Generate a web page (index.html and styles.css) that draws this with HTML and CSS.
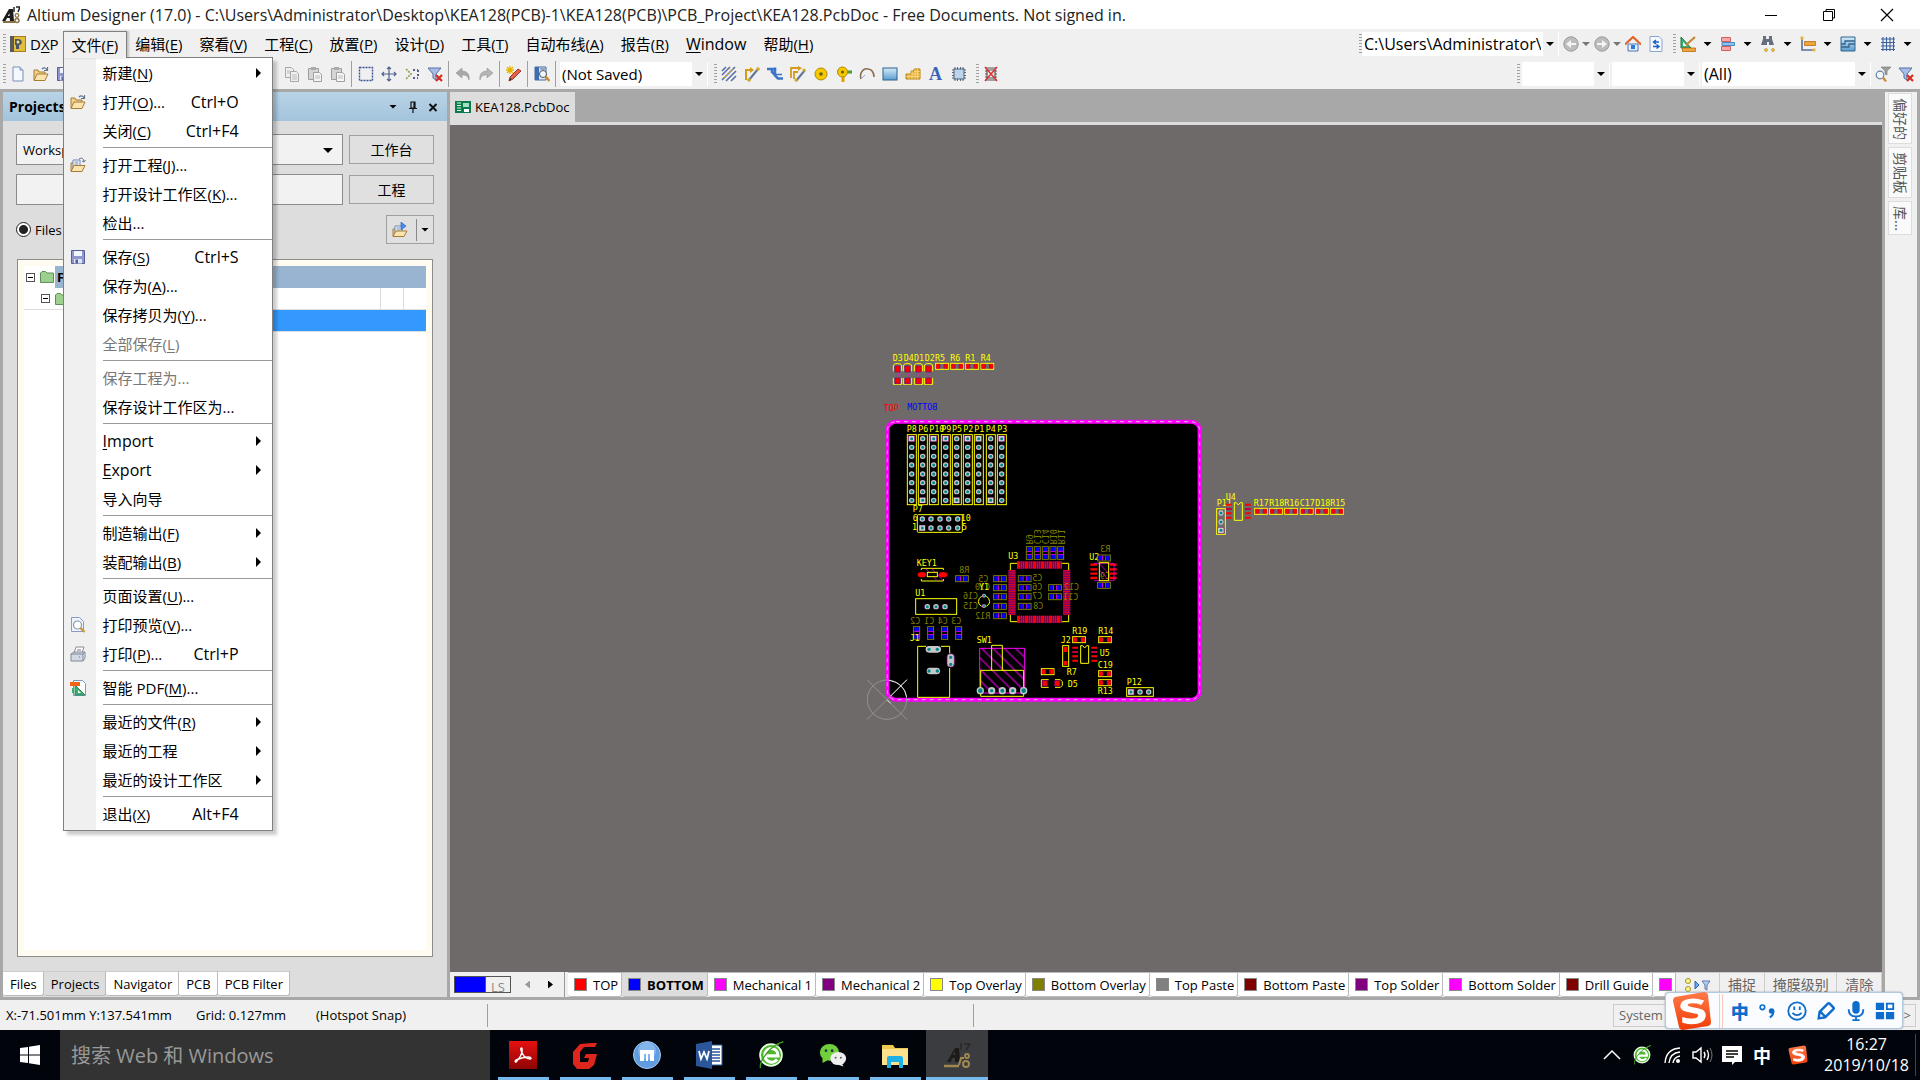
FILE: index.html
```html
<!DOCTYPE html>
<html lang="zh-CN">
<head>
<meta charset="utf-8">
<title>Altium Designer (17.0)</title>
<link rel="stylesheet" href="styles.css">
</head>
<body>
<svg class="sprite" aria-hidden="true">
  <defs>
    <linearGradient id="g-red" x1="0" y1="0" x2="0" y2="1"><stop offset="0" stop-color="#e81010"/><stop offset="1" stop-color="#8c0404"/></linearGradient>
    <linearGradient id="g-blue" x1="0" y1="0" x2="0" y2="1"><stop offset="0" stop-color="#d4ecf8"/><stop offset="1" stop-color="#5a9cd0"/></linearGradient>
    <linearGradient id="g-orange" x1="0" y1="0" x2="0" y2="1"><stop offset="0" stop-color="#ff7a48"/><stop offset="1" stop-color="#f03c08"/></linearGradient>
    <symbol id="i-app" viewBox="0 0 18 18"><path d="M0 15L7 3h4l1 12H8l-.4-3H5l-1.500 3z" fill="#1c1c1c"/><path d="M6 10h1.600L7.300 7z" fill="#fff"/><path d="M12 1v5M14 1h4l-2 5" stroke="#222" fill="none" stroke-width="1.500"/><path d="M1 16h12" stroke="#8a7346" stroke-width="2"/><circle cx="15" cy="9.500" r="1.800" fill="none" stroke="#8a7346" stroke-width="1.300"/><circle cx="15" cy="14.500" r="2" fill="none" stroke="#8a7346" stroke-width="1.500"/></symbol>
    <symbol id="i-dxp" viewBox="0 0 16 16"><rect x=".5" y=".5" width="15" height="15" fill="#e3bd3c" stroke="#a5801c"/><path d="M0 0h4v16H0z" fill="#5a5a5a"/><path d="M5 3h3c5 0 5 6 1 6v4H6V9H5z" fill="#4c5568"/><circle cx="8" cy="6" r="1.500" fill="#f5dc80"/></symbol>
    <symbol id="i-new" viewBox="0 0 16 16"><path d="M3 1h7l3 3v11H3z" fill="#f4f8ff" stroke="#7b8fb8"/><path d="M10 1v3h3" fill="#cfdcf2" stroke="#7b8fb8"/></symbol>
    <symbol id="i-open" viewBox="0 0 16 16"><path d="M1 14V4h4l1 2h6v3" fill="#f3d08a" stroke="#a87c35"/><path d="M1 14.500L4 8h11l-3 6.500z" fill="#fbe3b0" stroke="#a87c35"/><path d="M9 3c2-2 4-1 5 1m.5-3v3.500H11" fill="none" stroke="#60758e" stroke-width="1.200"/></symbol>
    <symbol id="i-openprj" viewBox="0 0 16 16"><path d="M1 14V6h3" fill="#f3d08a" stroke="#a87c35"/><path d="M3 3h7v8H3z" fill="#fff" stroke="#6b86b5"/><path d="M4.500 5h4M4.500 7h4" stroke="#6b86b5"/><path d="M1 14.500L4 8.500h11l-3 6z" fill="#fbe3b0" stroke="#a87c35"/><path d="M9 2c3-2 5 0 5 3m1.500-2L14 5l-2-1" fill="none" stroke="#60758e"/></symbol>
    <symbol id="i-save" viewBox="0 0 16 16"><path d="M1.500 1.500h13v13h-13z" fill="#8f98cc" stroke="#565f96"/><path d="M4 2h8v5H4z" fill="#f2f4ff"/><path d="M4 10h8v4.500H4z" fill="#dfe3f5"/><path d="M5.500 10.500h2.500v4H5.500z" fill="#565f96"/></symbol>
    <symbol id="i-copy" viewBox="0 0 16 16"><path d="M1.500 1.500h6l2 2v8h-8z" fill="#efefef" stroke="#a8a8a8"/><path d="M6.500 5.500h6l2 2v8h-8z" fill="#efefef" stroke="#a8a8a8"/><path d="M8 9h5M8 11h5M8 13h5M3 5h3M3 7h3" stroke="#bbb"/></symbol>
    <symbol id="i-paste" viewBox="0 0 16 16"><path d="M1.500 2.500h10v11h-10z" fill="#d5d5d5" stroke="#9c9c9c"/><path d="M4 1h5v3H4z" fill="#aaa"/><path d="M6.500 6.500h6l2 2v7h-8z" fill="#f5f5f5" stroke="#a0a0a0"/><path d="M8 10h5M8 12h5" stroke="#bbb"/></symbol>
    <symbol id="i-select" viewBox="0 0 16 16"><rect x="1.500" y="1.500" width="13" height="13" fill="none" stroke="#3c5294" stroke-width="1.400" stroke-dasharray="2 1"/></symbol>
    <symbol id="i-move" viewBox="0 0 16 16"><path d="M8 1v14M1 8h14M6 3l2-2 2 2M6 13l2 2 2-2M3 6L1 8l2 2M13 6l2 2-2 2" fill="none" stroke="#50628e" stroke-width="1.200"/></symbol>
    <symbol id="i-desel" viewBox="0 0 16 16"><path d="M2 3l5 5-5 5" fill="none" stroke="#929a50" stroke-width="1.600" stroke-dasharray="2 1"/><path d="M9 4h5M9 12h5M14 4v8" stroke="#555f88" stroke-width="2" stroke-dasharray="2 2"/></symbol>
    <symbol id="i-filterx" viewBox="0 0 16 16"><path d="M1 2h13L9 8v6l-3-2V8z" fill="#a5bde8" stroke="#56709f"/><path d="M9 9l6 6m0-6l-6 6" stroke="#d42c20" stroke-width="2.200"/></symbol>
    <symbol id="i-undo" viewBox="0 0 16 16"><path d="M1 7l6-5v3c5 0 8 3 7 9-1-4-3-5-7-5v3z" fill="#a8a8a8" stroke="#8d8d8d" stroke-width=".5"/></symbol>
    <symbol id="i-redo" viewBox="0 0 16 16"><path d="M15 7L9 2v3c-5 0-8 3-7 9 1-4 3-5 7-5v3z" fill="#b4b4b4" stroke="#8d8d8d" stroke-width=".5"/></symbol>
    <symbol id="i-pencil" viewBox="0 0 16 16"><path d="M3 15l1-4 8-8 3 2-8 8z" fill="#e2604c" stroke="#a03828"/><path d="M3 15l1-3 2 1z" fill="#333"/><path d="M4 0v8M0 4h8M1 1l6 6M7 1L1 7" stroke="#e6b400" stroke-width="1.300"/></symbol>
    <symbol id="i-browse" viewBox="0 0 16 16"><path d="M1 1h11v13H1z" fill="#dce8f8" stroke="#46689c"/><path d="M1 1h4v13H1z" fill="#3f6cae"/><path d="M6 3h5" stroke="#46689c"/><circle cx="9" cy="8" r="3.500" fill="#eef6ff" stroke="#555"/><path d="M11.500 10.500l4 4.500" stroke="#c9882c" stroke-width="2.400"/></symbol>
    <symbol id="i-hatch" viewBox="0 0 16 16"><path d="M1 5l4-4M1 9l8-8M1 14L14 1M5 15L15 5M10 15l5-5" stroke="#5b6fa8" stroke-width="1.600"/><path d="M3 12L12 3" stroke="#d3a030"/></symbol>
    <symbol id="i-route" viewBox="0 0 16 16"><path d="M2 14V4h4" fill="none" stroke="#d39b1c" stroke-width="2"/><path d="M6 1l4 3-4 3z" fill="#d39b1c"/><path d="M5 14l9-11" stroke="#60759c" stroke-width="2"/><circle cx="5" cy="14" r="1.800" fill="#d3a81c"/><circle cx="14" cy="3" r="1.800" fill="#d3a81c"/></symbol>
    <symbol id="i-route2" viewBox="0 0 16 16"><path d="M1 12V2h8M4 13V6h4" fill="none" stroke="#d39b1c" stroke-width="1.800"/><path d="M8 0l4 2-4 3z" fill="#d39b1c"/><path d="M6 15l9-11" stroke="#60759c" stroke-width="2"/><circle cx="6" cy="14" r="1.600" fill="#d3a81c"/><circle cx="14" cy="4" r="1.600" fill="#d3a81c"/></symbol>
    <symbol id="i-multi" viewBox="0 0 16 16"><path d="M0 3h8M8 1.500v8l3 3h5M5 3v3l3 3" fill="none" stroke="#3c74c8" stroke-width="2.600"/><path d="M9 8.500h6" stroke="#3c74c8" stroke-width="1.500"/></symbol>
    <symbol id="i-via" viewBox="0 0 16 16"><circle cx="8" cy="8" r="6" fill="#f5c800" stroke="#b38900"/><circle cx="8" cy="8" r="1.800" fill="#6b5a18"/></symbol>
    <symbol id="i-pad" viewBox="0 0 16 16"><path d="M7 6h9" stroke="#4f9c2c" stroke-width="3"/><path d="M7 8v8" stroke="#e0a000" stroke-width="3"/><circle cx="6.500" cy="6" r="5" fill="#f5c800" stroke="#b38900"/><circle cx="6.500" cy="6" r="1.600" fill="#6b5a18"/></symbol>
    <symbol id="i-arc" viewBox="0 0 16 16"><path d="M2 13C0 6 5 2 9 3c4 0 6 4 6 8" fill="none" stroke="#8a6d50" stroke-width="1.600"/><path d="M2 13l4-4" stroke="#9aa3cc"/></symbol>
    <symbol id="i-fill" viewBox="0 0 16 16"><rect x="1" y="2" width="14" height="12" fill="url(#g-blue)" stroke="#2d618e"/></symbol>
    <symbol id="i-poly" viewBox="0 0 16 16"><path d="M1 13V8h5V5h3V3h6v10z" fill="#e8b33c" stroke="#b98416"/><path d="M1 10.500h14M6 8h9M9 5.500h6M4 8v5M7 5v8M10 3v10M12.500 3v10" stroke="#fbe3a0" stroke-width=".6"/></symbol>
    <symbol id="i-chip" viewBox="0 0 16 16"><path d="M4 1v14M6.500 1v14M9.500 1v14M12 1v14M1 4h14M1 6.500h14M1 9.500h14M1 12h14" stroke="#667" stroke-width="1"/><rect x="3" y="3" width="10" height="10" fill="#bcd4ec" stroke="#4c6078"/></symbol>
    <symbol id="i-nochip" viewBox="0 0 16 16"><path d="M2 2h12M2 14h12M4 4h8v8H4zM2 5h2M2 8h2M2 11h2M12 5h2M12 8h2M12 11h2" fill="none" stroke="#555" stroke-width="1.200"/><path d="M2 1l12 14M14 1L2 15" stroke="#e03030" stroke-width="1.500"/></symbol>
    <symbol id="i-back" viewBox="0 0 16 16"><circle cx="8" cy="8" r="7.200" fill="#bdbdbd" stroke="#999"/><path d="M13 7H8V4L3 8l5 4V9h5z" fill="#f4f4f4"/></symbol>
    <symbol id="i-fwd" viewBox="0 0 16 16"><circle cx="8" cy="8" r="7.200" fill="#bdbdbd" stroke="#999"/><path d="M3 7h5V4l5 4-5 4V9H3z" fill="#f4f4f4"/></symbol>
    <symbol id="i-home" viewBox="0 0 16 16"><path d="M3 8h10v7H3z" fill="#e8eefc" stroke="#4a76b8"/><path d="M0 8.500L8 1l8 7.500" fill="none" stroke="#e06428" stroke-width="2.200"/><path d="M6 9h4v4H6z" fill="#2c7ce0"/></symbol>
    <symbol id="i-refresh" viewBox="0 0 16 16"><path d="M2 .5h9l3 3v12H2z" fill="#f4f8ff" stroke="#8da4cc"/><path d="M11 6H6M8 4L5.500 6 8 8M5 10.500h5M8.500 8.500L11 10.500l-2.500 2" fill="none" stroke="#1d62c8" stroke-width="1.500"/></symbol>
    <symbol id="i-draft" viewBox="0 0 16 16"><path d="M1 1v11h10z" fill="#3fae74" stroke="#1f7848"/><path d="M3 6v4h4z" fill="#fff"/><path d="M6 9l9-8" stroke="#c6862c" stroke-width="2.200"/><path d="M2.500 12h13v3.500h-13z" fill="#f0a53c" stroke="#b46c10" stroke-width=".8"/></symbol>
    <symbol id="i-align" viewBox="0 0 16 16"><path d="M1.500 1.500h9v4h-9zM1.500 10.500h9v4h-9z" fill="#f8a8a8" stroke="#cc6060"/><path d="M2 6.500h12.500v3H2z" fill="#8fc3ee" stroke="#4a88c0"/></symbol>
    <symbol id="i-find" viewBox="0 0 16 16"><path d="M3 0h3v3h3V0h3v3l2 6H9V6H7v3H1l2-6z" fill="#667080"/><circle cx="6" cy="14" r="1.500" fill="#f0c84c" stroke="#a88820" stroke-width=".6"/><circle cx="13" cy="14" r="1.500" fill="#f0c84c" stroke="#a88820" stroke-width=".6"/></symbol>
    <symbol id="i-dim" viewBox="0 0 16 16"><path d="M2 2v12h12" fill="none" stroke="#56709f" stroke-width="1.600"/><path d="M4.500 5.500h11v4h-11z" fill="#f0a53c" stroke="#b46c10" stroke-width=".8"/><circle cx="2" cy="2" r="1.700" fill="#e4b840"/><circle cx="14" cy="14" r="1.700" fill="#e4b840"/></symbol>
    <symbol id="i-room" viewBox="0 0 16 16"><path d="M1 1h14v14H1z" fill="url(#g-blue)" stroke="#33648c"/><path d="M1 8h4V5h10M1 11h8V8h6" fill="none" stroke="#33648c" stroke-width="1.300"/></symbol>
    <symbol id="i-grid" viewBox="0 0 16 16"><path d="M3 1v14M6.500 1v14M10 1v14M13.500 1v14M1 3h14M1 6.500h14M1 10h14M1 13.500h14" stroke="#3c5fa0" stroke-width="1.100"/></symbol>
    <symbol id="i-zoomf" viewBox="0 0 16 16"><path d="M6 1h10l-4 4v4l-2-1V5z" fill="#9c9c9c" stroke="#777" stroke-width=".6"/><circle cx="5" cy="9" r="3.800" fill="#eef6ff" stroke="#6a7f98" stroke-width="1.200"/><path d="M8 11.500l3 4" stroke="#cf8a2c" stroke-width="2.200"/></symbol>
    <symbol id="i-pcb" viewBox="0 0 16 16"><path d="M0 2h16v12H0z" fill="#0b7a4c"/><path d="M2 4h4M2 6.500h4M2 9h4M2 11.500h4" stroke="#d8f4e4" stroke-width="1.200"/><path d="M8 4h6v4H8z" fill="#9fe0c0"/><path d="M9 10h5v3H9z" fill="#fff"/></symbol>
    <symbol id="i-explore" viewBox="0 0 16 16"><path d="M1 14V7h3" fill="#f3d08a" stroke="#a87c35"/><path d="M3 4h7v8H3z" fill="#fff" stroke="#6b86b5"/><path d="M4.500 6h4M4.500 8h4" stroke="#6b86b5"/><path d="M1 14.500L4 9h11l-3 5.500z" fill="#fbe3b0" stroke="#a87c35"/><path d="M9 0l5 4-5 4z" fill="#4a8cf0" stroke="#1f58b8" stroke-width=".6"/></symbol>
    <symbol id="i-folder" viewBox="0 0 14 12"><path d="M.5 11.500V2l1.500-1.500h3.500L7 2h6.500v9.500z" fill="#9bd08e" stroke="#5f8f58"/></symbol>
    <symbol id="i-preview" viewBox="0 0 16 16"><path d="M1.500.5h8l4 4v10h-12z" fill="#eef4ff" stroke="#8a9cc0"/><circle cx="7.500" cy="8" r="4" fill="#fff" stroke="#8d98a8" stroke-width="1.200"/><path d="M10.500 11l4 4" stroke="#c9963c" stroke-width="2.400"/></symbol>
    <symbol id="i-print" viewBox="0 0 16 16"><path d="M4 7l2-6h8l-2 6" fill="#fff" stroke="#8c8c9a"/><path d="M1 8l3-2h11l-2 2v7H1z" fill="#d4dae4" stroke="#7f8898"/><path d="M1 8h12l2-2v6l-2 3" fill="none" stroke="#7f8898"/><path d="M7 4h4M9 11h1" stroke="#777"/></symbol>
    <symbol id="i-pdf" viewBox="0 0 16 16"><path d="M3.500.5h9l3 3v12h-12z" fill="#fff" stroke="#7a98c0"/><path d="M5 5v10h10z" fill="#3fae74" stroke="#2a8a56"/><path d="M8 10v3h3z" fill="#fff"/><path d="M0 2h10v4H0z" fill="#f06414"/><path d="M2 8v5h2V8z" fill="#3fae74"/></symbol>
    <symbol id="i-mask" viewBox="0 0 28 16"><circle cx="4" cy="4" r="2.500" fill="#fff890" stroke="#a09420"/><circle cx="4" cy="12" r="2.500" fill="#fff890" stroke="#a09420"/><path d="M11 4l4 4-4 4z" fill="#6aa8f0" stroke="#2c62b0"/><path d="M18 4h8l-3 4v5l-2-1V8z" fill="#b8d0f4" stroke="#6079ab"/></symbol>
    <symbol id="i-sogou" viewBox="0 0 40 40"><path d="M3 6L32 1q3 0 4 3l3 27q0 3-3 4L11 39q-3 0-4-3L1 10q0-3 2-4z" fill="url(#g-orange)"/><path d="M31 10C22 7 9 8 9 15c0 8 19 4 18 10-1 4-10 4-16 2v4c9 3 21 2 22-6 1-10-18-6-18-11 0-3 9-3 14-1z" fill="#fff" stroke="#fff" stroke-width="1.500"/></symbol>
    <symbol id="i-ebrowser" viewBox="0 0 32 32"><circle cx="16" cy="16" r="12.500" fill="#4cb82c" stroke="#e8ffe0" stroke-width="2"/><path d="M23 21c-5 6-14 3-14-5 0-10 15-10 15 1H11" fill="none" stroke="#fff" stroke-width="3.500"/><path d="M4 31c-2-8 12-27 26-30-3 0-6 3-7 5" fill="none" stroke="#3f9c22" stroke-width="1.500"/></symbol>
    <symbol id="t-pdf" viewBox="0 0 28 28"><path d="M0 0h28v28H0z" fill="url(#g-red)"/><path d="M6 21c4-2 8-9 7-13 0-2-2-1-1 1 1 5 5 9 9 9 2 0 1-2-2-2-5 0-9 2-12 3-2 2 0 3 1 1z" fill="none" stroke="#fff" stroke-width="1.400"/></symbol>
    <symbol id="t-g" viewBox="0 0 28 28"><path d="M26 2l-2 4H13L9 11v10h8l1-4h-5l2-4h11l-3 11-5 4H6l-4-5V11l7-8 12-1z" fill="#e0261c"/></symbol>
    <symbol id="t-m" viewBox="0 0 28 28"><circle cx="14" cy="14" r="13.500" fill="#5f9ce0" stroke="#a8ccf4"/><circle cx="14" cy="10" r="9" fill="#9cc8f4" opacity=".6"/><path d="M7 9h14v11h-4v-7h-2v7h-2v-7h-2v7H7z" fill="#fff"/></symbol>
    <symbol id="t-w" viewBox="0 0 28 28"><path d="M15 4h12v20H15z" fill="#fff" stroke="#2b579a"/><path d="M17 8h8M17 11h8M17 14h8M17 17h8M17 20h8" stroke="#2b579a" stroke-width="1.500"/><path d="M1 3l16-3v28L1 25z" fill="#2b579a"/><path d="M4 10l2 8 3-7 3 7 2-8" fill="none" stroke="#fff" stroke-width="1.800"/></symbol>
    <symbol id="t-wechat" viewBox="0 0 32 28"><ellipse cx="12" cy="11" rx="11" ry="9.500" fill="#6fd03c"/><path d="M4 17l0 6 6-3z" fill="#6fd03c"/><circle cx="8" cy="9" r="1.500" fill="#234"/><circle cx="15" cy="9" r="1.500" fill="#234"/><ellipse cx="22" cy="18" rx="9" ry="7.500" fill="#eee"/><path d="M26 23l2 4-6-2z" fill="#eee"/><circle cx="19" cy="17" r="1.100" fill="#555"/><circle cx="25" cy="17" r="1.100" fill="#555"/></symbol>
    <symbol id="t-folder" viewBox="0 0 28 28"><path d="M1 4h11l2 3h13v17H1z" fill="#f0c850"/><path d="M1 8h26v16H1z" fill="#fde08c"/><path d="M6 27V17q0-2 2-2h12q2 0 2 2v10h-4v-6h-8v6z" fill="#20b0e8"/></symbol>
    <symbol id="t-ad" viewBox="0 0 28 28"><path d="M4 21L12 7h4l1 14h-5v-4H9l-1 4zM10 14h2v-4z" fill="#1e1b18" fill-rule="evenodd"/><path d="M18 2v7M21 3h6l-4 6" fill="none" stroke="#2c2824" stroke-width="1.500"/><path d="M1 25h15" stroke="#a08850" stroke-width="2.500"/><path d="M16 24l2-7h3" fill="none" stroke="#a08850" stroke-width="2"/><circle cx="24" cy="15" r="2" fill="none" stroke="#a08850" stroke-width="1.800"/><circle cx="23" cy="23" r="3" fill="none" stroke="#a08850" stroke-width="2"/></symbol>
  </defs>
</svg>

<header class="titlebar">
  <svg class="ic app"><use href="#i-app"/></svg>
  <h1>Altium Designer (17.0) - C:\Users\Administrator\Desktop\KEA128(PCB)-1\KEA128(PCB)\PCB_Project\KEA128.PcbDoc - Free Documents. Not signed in.</h1>
  <div class="winbtns">
    <button aria-label="Minimize"><svg viewBox="0 0 14 14"><path d="M1 7.500h12" stroke="#000"/></svg></button>
    <button aria-label="Restore"><svg viewBox="0 0 14 14"><path d="M1.500 3.500h9v9h-9zM4 3.500v-2h8.500V10h-2" fill="none" stroke="#000"/></svg></button>
    <button aria-label="Close"><svg viewBox="0 0 14 14"><path d="M1 1l12 12M13 1L1 13" stroke="#000" stroke-width="1.200"/></svg></button>
  </div>
</header>

<div class="bar">
  <nav class="menubar">
    <i class="grip"></i>
    <button class="dxp"><svg class="ic"><use href="#i-dxp"/></svg><span>D<u>X</u>P</span></button>
    <div class="menu-root">
      <button class="open">文件(<u>F</u>)</button>
      <ul class="popup">
        <li><button>新建(<u>N</u>)<i class="sub"></i></button></li>
        <li><button><svg class="ic"><use href="#i-open"/></svg>打开(<u>O</u>)...<kbd>Ctrl+O</kbd></button></li>
        <li><button>关闭(<u>C</u>)<kbd>Ctrl+F4</kbd></button></li>
        <li class="line"></li>
        <li><button><svg class="ic"><use href="#i-openprj"/></svg>打开工程(<u>J</u>)...</button></li>
        <li><button>打开设计工作区(<u>K</u>)...</button></li>
        <li><button>检出...</button></li>
        <li class="line"></li>
        <li><button><svg class="ic"><use href="#i-save"/></svg>保存(<u>S</u>)<kbd>Ctrl+S</kbd></button></li>
        <li><button>保存为(<u>A</u>)...</button></li>
        <li><button>保存拷贝为(<u>Y</u>)...</button></li>
        <li><button disabled>全部保存(<u>L</u>)</button></li>
        <li class="line"></li>
        <li><button disabled>保存工程为...</button></li>
        <li><button>保存设计工作区为...</button></li>
        <li class="line"></li>
        <li><button class="latin"><span><u>I</u>mport</span><i class="sub"></i></button></li>
        <li><button class="latin"><span><u>E</u>xport</span><i class="sub"></i></button></li>
        <li><button>导入向导</button></li>
        <li class="line"></li>
        <li><button>制造输出(<u>F</u>)<i class="sub"></i></button></li>
        <li><button>装配输出(<u>B</u>)<i class="sub"></i></button></li>
        <li class="line"></li>
        <li><button>页面设置(<u>U</u>)...</button></li>
        <li><button><svg class="ic"><use href="#i-preview"/></svg>打印预览(<u>V</u>)...</button></li>
        <li><button><svg class="ic"><use href="#i-print"/></svg>打印(<u>P</u>)...<kbd>Ctrl+P</kbd></button></li>
        <li class="line"></li>
        <li><button><svg class="ic"><use href="#i-pdf"/></svg><span>智能 PDF(<u>M</u>)...</span></button></li>
        <li class="line"></li>
        <li><button>最近的文件(<u>R</u>)<i class="sub"></i></button></li>
        <li><button>最近的工程<i class="sub"></i></button></li>
        <li><button>最近的设计工作区<i class="sub"></i></button></li>
        <li class="line"></li>
        <li><button>退出(<u>X</u>)<kbd>Alt+F4</kbd></button></li>
      </ul>
    </div>
    <button>编辑(<u>E</u>)</button>
    <button>察看(<u>V</u>)</button>
    <button>工程(<u>C</u>)</button>
    <button>放置(<u>P</u>)</button>
    <button>设计(<u>D</u>)</button>
    <button>工具(<u>T</u>)</button>
    <button>自动布线(<u>A</u>)</button>
    <button>报告(<u>R</u>)</button>
    <button class="latin"><span><u>W</u>indow</span></button>
    <button>帮助(<u>H</u>)</button>
  </nav>
  <div class="tools right">
    <i class="grip"></i>
    <label class="combo c-path"><select aria-label="Path"><option>C:\Users\Administrator\Desktop</option></select></label>
    <button class="tb"><svg class="ic"><use href="#i-back"/></svg></button><i class="caret dim"></i>
    <button class="tb"><svg class="ic"><use href="#i-fwd"/></svg></button><i class="caret dim"></i>
    <button class="tb"><svg class="ic"><use href="#i-home"/></svg></button>
    <button class="tb"><svg class="ic"><use href="#i-refresh"/></svg></button>
    <i class="grip gap"></i>
    <button class="tb split"><svg class="ic"><use href="#i-draft"/></svg><i class="caret"></i></button>
    <button class="tb split"><svg class="ic"><use href="#i-align"/></svg><i class="caret"></i></button>
    <button class="tb split"><svg class="ic"><use href="#i-find"/></svg><i class="caret"></i></button>
    <button class="tb split"><svg class="ic"><use href="#i-dim"/></svg><i class="caret"></i></button>
    <button class="tb split"><svg class="ic"><use href="#i-room"/></svg><i class="caret"></i></button>
    <button class="tb split"><svg class="ic"><use href="#i-grid"/></svg><i class="caret"></i></button>
  </div>
</div>

<div class="bar">
  <div class="tools">
    <i class="grip"></i>
    <button class="tb"><svg class="ic"><use href="#i-new"/></svg></button>
    <button class="tb"><svg class="ic"><use href="#i-open"/></svg></button>
    <button class="tb"><svg class="ic"><use href="#i-save"/></svg></button>
    <span class="covered"></span>
    <button class="tb"><svg class="ic"><use href="#i-copy"/></svg></button>
    <button class="tb"><svg class="ic"><use href="#i-paste"/></svg></button>
    <button class="tb"><svg class="ic"><use href="#i-paste"/></svg></button>
    <i class="sep"></i>
    <button class="tb"><svg class="ic"><use href="#i-select"/></svg></button>
    <button class="tb"><svg class="ic"><use href="#i-move"/></svg></button>
    <button class="tb"><svg class="ic"><use href="#i-desel"/></svg></button>
    <button class="tb"><svg class="ic"><use href="#i-filterx"/></svg></button>
    <i class="sep"></i>
    <button class="tb"><svg class="ic"><use href="#i-undo"/></svg></button>
    <button class="tb"><svg class="ic"><use href="#i-redo"/></svg></button>
    <i class="sep"></i>
    <button class="tb"><svg class="ic"><use href="#i-pencil"/></svg></button>
    <i class="sep"></i>
    <button class="tb"><svg class="ic"><use href="#i-browse"/></svg></button>
    <i class="sep"></i>
    <label class="combo c-view"><select aria-label="View"><option>(Not Saved)</option></select></label>
    <i class="grip gap"></i>
    <button class="tb"><svg class="ic"><use href="#i-hatch"/></svg></button>
    <button class="tb"><svg class="ic"><use href="#i-route"/></svg></button>
    <button class="tb"><svg class="ic"><use href="#i-multi"/></svg></button>
    <button class="tb"><svg class="ic"><use href="#i-route2"/></svg></button>
    <button class="tb"><svg class="ic"><use href="#i-via"/></svg></button>
    <button class="tb"><svg class="ic"><use href="#i-pad"/></svg></button>
    <button class="tb"><svg class="ic"><use href="#i-arc"/></svg></button>
    <button class="tb"><svg class="ic"><use href="#i-fill"/></svg></button>
    <button class="tb"><svg class="ic"><use href="#i-poly"/></svg></button>
    <button class="tb letter">A</button>
    <button class="tb"><svg class="ic"><use href="#i-chip"/></svg></button>
    <i class="grip gap"></i>
    <button class="tb"><svg class="ic"><use href="#i-nochip"/></svg></button>
  </div>
  <div class="tools right filters">
    <i class="grip"></i>
    <label class="combo c-small"><select aria-label="Net"><option></option></select></label>
    <label class="combo c-small"><select aria-label="Component"><option></option></select></label>
    <label class="combo c-all"><select aria-label="Filter"><option>(All)</option></select></label>
    <div class="pair">
      <button class="tb"><svg class="ic"><use href="#i-zoomf"/></svg></button>
      <button class="tb"><svg class="ic"><use href="#i-filterx"/></svg></button>
    </div>
  </div>
</div>

<main class="work">
  <aside class="panel">
    <div class="panel-head">
      <h2>Projects</h2>
      <button aria-label="Menu"><i class="caret"></i></button>
      <button aria-label="Pin"><svg viewBox="0 0 12 12"><path d="M4 1h4v6H4zM2 7.500h8M6 8v4M7 1v6" fill="none" stroke="#111" stroke-width="1.200"/></svg></button>
      <button aria-label="Close"><svg viewBox="0 0 12 12"><path d="M2.500 3l7 7M9.500 3l-7 7" stroke="#111" stroke-width="2"/></svg></button>
    </div>
    <div class="form">
      <label class="combo boxed"><select aria-label="Workspace"><option>Workspace1.DsnWrk</option></select></label>
      <button class="btn">工作台</button>
      <input type="text" class="boxed" aria-label="Project">
      <button class="btn">工程</button>
    </div>
    <div class="mode">
      <label><input type="radio" name="mode" checked>Files</label>
      <button class="btn small" aria-label="Explore"><svg class="ic"><use href="#i-explore"/></svg><i class="vline"></i><i class="caret"></i></button>
    </div>
    <div class="tree">
      <ul>
        <li class="r1"><i class="tog"></i><svg class="fold"><use href="#i-folder"/></svg><span>F</span></li>
        <li class="r2"><i class="tog"></i><svg class="fold"><use href="#i-folder"/></svg><span></span><b></b><b></b></li>
        <li class="r3"></li>
      </ul>
    </div>
    <div class="ptabs">
      <button>Files</button><button class="on">Projects</button><button>Navigator</button><button>PCB</button><button>PCB Filter</button>
    </div>
  </aside>

  <section class="doc">
    <div class="doctabs"><button><svg class="ic"><use href="#i-pcb"/></svg>KEA128.PcbDoc</button></div>
    <div class="canvas">
      <svg class="pcb" viewBox="0 0 1500 1170">
        <defs>
          <pattern id="hatch" width="24" height="24" patternUnits="userSpaceOnUse" patternTransform="rotate(-45)"><path d="M12 0v24" stroke="#f0f" stroke-width="3"/></pattern>
          <g id="pin"><rect x="-8" y="-6" width="16" height="12" fill="#800080"/><circle r="8" fill="#c8c8c8"/><circle r="4.500" fill="#008888"/></g>
          <g id="pin1"><rect x="-10" y="-9" width="20" height="18" fill="#800080"/><rect x="-9" y="-8" width="17" height="16" fill="#d0d0d0"/><circle r="4.500" fill="#008888"/></g>
          <g id="col"><rect x="0" y="0" width="27" height="210" fill="none" stroke="#ff0" stroke-width="3"/><use href="#pin" x="13" y="12"/><use href="#pin" x="13" y="38"/><use href="#pin" x="13" y="65"/><use href="#pin" x="13" y="91"/><use href="#pin" x="13" y="118"/><use href="#pin" x="13" y="144"/><use href="#pin" x="13" y="171"/><use href="#pin" x="13" y="197"/></g>
          <g id="res"><rect x="1" y="1" width="38" height="18" fill="none" stroke="#ff0" stroke-width="3"/><path d="M13 4v12M27 4v12" stroke="#800080" stroke-width="4"/><path d="M3 4h9v12H3zM28 4h9v12h-9z" fill="#f00" stroke="#f00" stroke-width="2"/></g>
          <g id="bres"><rect x="1" y="1" width="38" height="18" fill="none" stroke="#808000" stroke-width="3"/><path d="M15 3v14M25 3v14" stroke="#f0f" stroke-width="3"/><path d="M4 4h9v12H4zM27 4h9v12h-9z" fill="#00f" stroke="#00f" stroke-width="2"/></g>
          <g id="vres"><rect x="1" y="1" width="18" height="38" fill="none" stroke="#808000" stroke-width="3"/><path d="M3 15h14M3 25h14" stroke="#f0f" stroke-width="3"/><path d="M4 4h12v9H4zM4 27h12v9H4z" fill="#00f" stroke="#00f" stroke-width="2"/></g>
          <g id="diode"><path d="M1 24V8q2-7 7-7h10q7 0 8 7v16M1 44v19h25V44" fill="none" stroke="#ff0" stroke-width="3"/><path d="M6 8h15v18H6zM6 44h15v17H6z" fill="#f00" stroke="#800080" stroke-width="2"/><path d="M11 34l6-3v6z" fill="#f0f"/></g>
          <g id="soic"><path d="M0 7h17M0 20h17M0 33h17M0 46h17M57 7h17M57 20h17M57 33h17M57 46h17" stroke="#f00" stroke-width="6"/><path d="M0 20h17M57 20h17" stroke="#800080" stroke-width="3"/><path d="M25 1h6l6 7 6-7h6v53H25z" fill="none" stroke="#ff0" stroke-width="3"/></g>
        </defs>
        <g class="silk">
          <text x="98" y="63">D3</text><text x="131" y="63">D4</text><text x="162" y="63">D1</text><text x="194" y="63">D2</text><text x="225" y="63">R5</text><text x="271" y="63">R6</text><text x="316" y="63">R1</text><text x="362" y="63">R4</text>
        </g>
        <use href="#diode" x="99" y="70"/><use href="#diode" x="129" y="70"/><use href="#diode" x="162" y="70"/><use href="#diode" x="192" y="70"/>
        <use href="#res" x="226" y="69"/><use href="#res" x="271" y="69"/><use href="#res" x="316" y="69"/><use href="#res" x="362" y="69"/>
        <text class="top" x="71" y="213">TOP</text>
        <text class="bot" transform="translate(232 211) scale(-1 1)">BOTTOM</text>

        <rect x="82" y="245" width="937" height="834" rx="26" fill="#000" stroke="#f0f" stroke-width="12"/>
        <rect x="82" y="245" width="937" height="834" rx="26" fill="none" stroke="#d8b8d8" stroke-width="3" stroke-dasharray="12 12"/>

        <g class="silk">
          <text x="140" y="275">P8</text><text x="175" y="275">P6</text><text x="208" y="275">P10</text><text x="244" y="275">P9</text><text x="276" y="275">P5</text><text x="310" y="275">P2</text><text x="343" y="275">P1</text><text x="377" y="275">P4</text><text x="412" y="275">P3</text>
          <text x="158" y="516">P7</text><text x="158" y="543">6</text><text x="302" y="543">10</text><text x="156" y="570">1</text><text x="306" y="570">5</text>
          <text x="445" y="656">U3</text><text x="688" y="660">U2</text><text x="170" y="678">KEY1</text><text x="166" y="768">U1</text>
          <text x="350" y="909">SW1</text><text x="602" y="909">J2</text><text x="637" y="882">R19</text><text x="715" y="882">R14</text>
          <text x="719" y="948">U5</text><text x="713" y="984">C19</text><text x="620" y="1006">R7</text><text x="623" y="1041">D5</text><text x="713" y="1061">R13</text><text x="800" y="1035">P12</text>
          <text x="1070" y="497">P11</text><text x="1097" y="480">U4</text>
          <text x="1181" y="498">R17</text><text x="1228" y="498">R18</text><text x="1273" y="498">R16</text><text x="1319" y="498">C17</text><text x="1366" y="498">D18</text><text x="1411" y="498">R15</text>
        </g>
        <use href="#col" x="142" y="284"/><use href="#col" x="175" y="284"/><use href="#col" x="208" y="284"/><use href="#col" x="244" y="284"/><use href="#col" x="277" y="284"/><use href="#col" x="310" y="284"/><use href="#col" x="343" y="284"/><use href="#col" x="379" y="284"/><use href="#col" x="412" y="284"/>
        <use href="#pin1" x="155" y="296"/><use href="#pin1" x="221" y="296"/><use href="#pin1" x="257" y="296"/><use href="#pin1" x="323" y="296"/><use href="#pin1" x="356" y="296"/><use href="#pin1" x="425" y="296"/><use href="#pin1" x="188" y="481"/><use href="#pin1" x="290" y="481"/><use href="#pin1" x="392" y="481"/>

        <rect x="172" y="524" width="135" height="53" rx="3" fill="none" stroke="#ff0" stroke-width="3"/>
        <use href="#pin" x="187" y="537"/><use href="#pin" x="213" y="537"/><use href="#pin" x="240" y="537"/><use href="#pin" x="266" y="537"/><use href="#pin" x="293" y="537"/>
        <use href="#pin1" x="187" y="564"/><use href="#pin" x="213" y="564"/><use href="#pin" x="240" y="564"/><use href="#pin" x="266" y="564"/><use href="#pin" x="293" y="564"/>

        <path d="M184 690v-5h66v5M184 717v6h66v-6" fill="none" stroke="#ff0" stroke-width="3"/>
        <path d="M197 686l34 36M215 686l34 36" stroke="#f0f" stroke-width="2"/>
        <rect x="202" y="697" width="30" height="13" fill="#000" stroke="#ff0" stroke-width="3"/>
        <ellipse cx="186" cy="704" rx="13" ry="8" fill="#f00"/><ellipse cx="249" cy="704" rx="13" ry="8" fill="#f00"/>
        <rect x="167" y="776" width="123" height="47" fill="none" stroke="#ff0" stroke-width="3"/>
        <use href="#pin" x="202" y="800"/><use href="#pin" x="228" y="800"/><use href="#pin" x="255" y="800"/>

        <use href="#bres" x="286" y="706"/>
        <use href="#bres" x="400" y="706"/><use href="#bres" x="400" y="733"/><use href="#bres" x="400" y="760"/><use href="#bres" x="400" y="789"/><use href="#bres" x="400" y="817"/>
        <use href="#bres" x="474" y="706"/><use href="#bres" x="474" y="733"/><use href="#bres" x="474" y="760"/><use href="#bres" x="474" y="789"/>
        <use href="#bres" x="565" y="733"/><use href="#bres" x="565" y="760"/>
        <use href="#bres" x="712" y="644"/><use href="#bres" x="712" y="726"/>
        <use href="#vres" x="498" y="619"/><use href="#vres" x="522" y="619"/><use href="#vres" x="546" y="619"/><use href="#vres" x="569" y="619"/><use href="#vres" x="592" y="619"/>
        <use href="#vres" x="160" y="859"/><use href="#vres" x="202" y="859"/><use href="#vres" x="244" y="859"/><use href="#vres" x="286" y="859"/>
        <path d="M451 690v-20h20M606 670h20v20M451 825v20h20M606 845h20v-20" fill="none" stroke="#ff0" stroke-width="3"/>
        <path d="M471 675h135M471 838h135" stroke="#800040" stroke-width="22"/>
        <path d="M471 675h135M471 838h135" stroke="#f00" stroke-width="21" stroke-dasharray="9 3 3 3 3 3"/>
        <path d="M456 690v135M620 690v135" stroke="#800060" stroke-width="22"/>
        <path d="M456 690v135M620 690v135" stroke="#e00020" stroke-width="21" stroke-dasharray="3 4"/>
        <g class="back">
          <text transform="translate(328 699) scale(-1 1)">R8</text>
          <text transform="translate(385 726) scale(-1 1)">C5</text><text transform="translate(390 751) scale(-1 1)">C10</text><text transform="translate(354 777) scale(-1 1)">C16</text><text transform="translate(354 806) scale(-1 1)">C15</text><text transform="translate(391 838) scale(-1 1)">R12</text>
          <text transform="translate(547 724) scale(-1 1)">C5</text><text transform="translate(547 750) scale(-1 1)">C6</text><text transform="translate(547 778) scale(-1 1)">C7</text><text transform="translate(550 807) scale(-1 1)">C8</text>
          <text transform="translate(657 751) scale(-1 1)">C12</text><text transform="translate(655 779) scale(-1 1)">C11</text>
          <text transform="translate(751 635) scale(-1 1)">R3</text><text transform="translate(750 717) scale(-1 1)">C9</text>
          <text transform="translate(181 852) scale(-1 1)">C2</text><text transform="translate(223 852) scale(-1 1)">C1</text><text transform="translate(263 852) scale(-1 1)">C4</text><text transform="translate(304 852) scale(-1 1)">C3</text>
          <text transform="translate(499 613) rotate(-90) scale(1 -1)">R9</text><text transform="translate(523 613) rotate(-90) scale(1 -1)">C13</text><text transform="translate(547 613) rotate(-90) scale(1 -1)">C14</text><text transform="translate(571 613) rotate(-90) scale(1 -1)">R10</text><text transform="translate(595 613) rotate(-90) scale(1 -1)">R11</text>
        </g>
        <g class="silk"><text x="357" y="751">Y1</text><text x="149" y="902">J1</text></g>
        <path d="M365 768q-10 8-10 17t10 14M379 768q10 8 10 17t-10 14" fill="none" stroke="#ff0" stroke-width="3"/>
        <use href="#pin" transform="translate(372 767) scale(.7)"/><use href="#pin" transform="translate(372 798) scale(.7)"/>
        <path d="M691 674h20M691 688h20M691 701h20M691 714h20M750 674h20M750 688h20M750 701h20M750 714h20" stroke="#f00" stroke-width="7"/>
        <path d="M702 670h60v52h-60" fill="none" stroke="#f0f" stroke-width="2"/>
        <path d="M718 671l28 30M718 690l28 30" stroke="#f0f" stroke-width="2"/>
        <rect x="718" y="668" width="28" height="54" fill="none" stroke="#ff0" stroke-width="3"/>

        <path d="M198 919h-25v153h96v-88M269 940v-21h-26" fill="none" stroke="#ff0" stroke-width="3"/>
        <rect x="197" y="918" width="46" height="20" rx="10" fill="#c8c8c8"/><circle cx="207" cy="928" r="5" fill="#008888"/><circle cx="232" cy="928" r="5" fill="#008888"/>
        <rect x="261" y="941" width="22" height="40" rx="10" fill="#c8c8c8" stroke="#800080" stroke-width="2"/><circle cx="272" cy="952" r="5" fill="#008888"/><circle cx="272" cy="973" r="5" fill="#008888"/>
        <rect x="200" y="983" width="40" height="20" rx="10" fill="#c8c8c8"/><circle cx="207" cy="993" r="5" fill="#008888"/><circle cx="232" cy="993" r="5" fill="#008888"/>

        <rect x="359" y="925" width="135" height="134" fill="url(#hatch)" stroke="#f0f" stroke-width="3"/>
        <path d="M395 990v-74h32v74M362 991h129v78H362z" fill="none" stroke="#ff0" stroke-width="3"/>
        <g fill="#c8c8c8"><circle cx="361" cy="1052" r="11"/><circle cx="395" cy="1052" r="11"/><circle cx="427" cy="1052" r="11"/><circle cx="458" cy="1052" r="11"/><circle cx="491" cy="1052" r="11"/></g>
        <g fill="#008888"><circle cx="361" cy="1052" r="7"/><circle cx="395" cy="1052" r="5"/><circle cx="427" cy="1052" r="6"/><circle cx="458" cy="1052" r="5"/><circle cx="491" cy="1052" r="7"/></g>

        <use href="#res" x="637" y="889"/><use href="#res" x="715" y="889"/><use href="#res" x="543" y="985"/><use href="#res" x="715" y="991"/><use href="#res" x="715" y="1018"/>
        <rect x="608" y="917" width="18" height="62" fill="none" stroke="#ff0" stroke-width="3"/><path d="M611 921h11v15h-11zM611 963h11v12h-11z" fill="#f00"/>
        <use href="#soic" x="637" y="916"/>
        <path d="M566 1019h-22v23h22M585 1019h16l6 6v11l-6 6h-16" fill="none" stroke="#ff0" stroke-width="3"/><path d="M547 1022h15v16h-15zM584 1022h15v16h-15z" fill="#f00" stroke="#800080" stroke-width="2"/>
        <rect x="800" y="1043" width="80" height="26" fill="none" stroke="#ff0" stroke-width="3"/><use href="#pin1" x="813" y="1056"/><use href="#pin" x="840" y="1056"/><use href="#pin" x="866" y="1056"/>

        <rect x="1070" y="506" width="26" height="77" fill="none" stroke="#ff0" stroke-width="3"/><use href="#pin" x="1083" y="519"/><use href="#pin" x="1083" y="546"/><use href="#pin1" x="1083" y="571"/>
        <use href="#soic" x="1098" y="487"/>
        <use href="#res" x="1183" y="504"/><use href="#res" x="1228" y="504"/><use href="#res" x="1273" y="504"/><use href="#res" x="1320" y="504"/><use href="#res" x="1366" y="504"/><use href="#res" x="1411" y="504"/>

        <g fill="none" stroke="#999" stroke-width="2.500"><circle cx="81" cy="1079" r="59"/><path d="M21 1019l120 120M141 1019L21 1139"/></g>
        <path d="M87 1021q46 8 53 50M92 1068l49-49M92 1090L82 1080" fill="none" stroke="#fff" stroke-width="2.500"/>
      </svg>
    </div>
    <div class="layers">
      <div class="ls"><i></i><span>LS</span></div>
      <button class="arr l dim" aria-label="Previous"></button><button class="arr r" aria-label="Next"></button>
      <div class="ltabs">
        <button><i class="sw red"></i>TOP</button>
        <button class="on"><i class="sw blue"></i>BOTTOM</button>
        <button><i class="sw magenta"></i>Mechanical 1</button>
        <button><i class="sw purple"></i>Mechanical 2</button>
        <button><i class="sw yellow"></i>Top Overlay</button>
        <button><i class="sw olive"></i>Bottom Overlay</button>
        <button><i class="sw gray"></i>Top Paste</button>
        <button><i class="sw maroon"></i>Bottom Paste</button>
        <button><i class="sw purple"></i>Top Solder</button>
        <button><i class="sw magenta"></i>Bottom Solder</button>
        <button><i class="sw maroon"></i>Drill Guide</button>
        <button aria-label="Keep-Out Layer"><i class="sw magenta"></i></button>
      </div>
      <div class="lcmds">
        <button class="mask" aria-label="Mask"><svg><use href="#i-mask"/></svg></button>
        <button>捕捉</button><button>掩膜级别</button><button>清除</button>
      </div>
    </div>
  </section>

  <aside class="side">
    <button>偏好的</button><button>剪贴板</button><button>库...</button>
  </aside>
</main>

<footer class="status">
  <span class="s1">X:-71.501mm Y:137.541mm</span><span class="s2">Grid: 0.127mm</span><span class="s3">(Hotspot Snap)</span><span class="s4"></span>
  <div class="sys"><button>System</button><button>&gt;</button></div>
  <div class="ime">
    <svg class="logo"><use href="#i-sogou"/></svg><i class="imeline"></i>
    <b>中</b>
    <svg viewBox="0 0 24 24"><circle cx="7" cy="8" r="2.500" fill="none" stroke="#0d6ccc" stroke-width="1.800"/><circle cx="17" cy="12" r="3" fill="#0d6ccc"/><path d="M19 12q0 5-4 7" fill="none" stroke="#0d6ccc" stroke-width="2.200"/></svg>
    <svg viewBox="0 0 24 24"><circle cx="12" cy="12" r="9.500" fill="none" stroke="#0d6ccc" stroke-width="2"/><path d="M9 7v4M15 7v4M7 14q5 5 10 0" fill="none" stroke="#0d6ccc" stroke-width="2"/></svg>
    <svg viewBox="0 0 24 24"><path d="M4 20l1-7 9-9q1-1 2 0l4 4q1 1 0 2l-9 9zM6 13l5 5" fill="none" stroke="#0d6ccc" stroke-width="2.600"/></svg>
    <svg viewBox="0 0 24 24"><rect x="8" y="1" width="8" height="14" rx="4" fill="#0d6ccc"/><path d="M4 10q0 8 8 8t8-8M12 18v4M8 22h8" fill="none" stroke="#0d6ccc" stroke-width="2"/></svg>
    <svg viewBox="0 0 24 24"><path d="M2 3h9v8H2zM2 13h9v8H2zM13 13h9v8h-9z" fill="#0d6ccc"/><path d="M14 4h7v6h-7z" fill="none" stroke="#0d6ccc" stroke-width="2"/></svg>
  </div>
</footer>

<footer class="taskbar">
  <button class="start" aria-label="Start"><svg viewBox="0 0 20 20"><path d="M0 3l8-1v7.500H0zM9 1.800L20 0v9.500H9zM0 10.500h8V18l-8-1zM9 10.500h11V20L9 18.200z" fill="#fff"/></svg></button>
  <input type="search" class="search" placeholder="搜索 Web 和 Windows" aria-label="Search">
  <div class="apps">
    <button aria-label="PDF"><svg><use href="#t-pdf"/></svg></button>
    <button aria-label="Reader"><svg><use href="#t-g"/></svg></button>
    <button aria-label="Maxthon"><svg><use href="#t-m"/></svg></button>
    <button aria-label="Word"><svg><use href="#t-w"/></svg></button>
    <button aria-label="Browser"><svg><use href="#i-ebrowser"/></svg></button>
    <button aria-label="WeChat"><svg><use href="#t-wechat"/></svg></button>
    <button aria-label="Explorer"><svg><use href="#t-folder"/></svg></button>
    <button class="on" aria-label="Altium"><svg><use href="#t-ad"/></svg></button>
  </div>
  <div class="tray">
    <svg viewBox="0 0 24 24"><path d="M4 16l8-8 8 8" fill="none" stroke="#fff" stroke-width="1.500"/></svg>
    <svg viewBox="0 0 24 24"><use href="#i-ebrowser" width="20" height="20" x="2" y="2"/></svg>
    <svg viewBox="0 0 24 24"><g fill="none" stroke="#fff" stroke-width="1.400"><path d="M5 20Q6 6 20 5M9 20q1-10 11-11M13 20q1-6 7-7"/></g><circle cx="18" cy="18" r="2" fill="#fff"/></svg>
    <svg viewBox="0 0 24 24"><path d="M3 9h3l5-4v14l-5-4H3zM14 9q2 3 0 6M17 7q3 5 0 10" fill="none" stroke="#fff" stroke-width="1.400"/><path d="M20 5q4 7 0 14" fill="none" stroke="#777"/></svg>
    <svg viewBox="0 0 24 24"><path d="M2 3h20v16h-7l-3 3v-3H2z" fill="#fff"/><path d="M6 8h12M6 11h12M6 14h8" stroke="#000" stroke-width="1.300"/></svg>
    <b>中</b>
    <svg class="sg" viewBox="0 0 24 24"><use href="#i-sogou" width="20" height="20" x="2" y="2"/></svg>
    <time>16:27<br>2019/10/18</time>
  </div>
</footer>
</body>
</html>
```
FILE: styles.css
```css
* { box-sizing: border-box; }
body {
  margin: 0;
  height: 100vh;
  display: flex;
  flex-direction: column;
  overflow: hidden;
  background: #a8a8a8;
  color: #000;
  font: 13px/20px "Open Sans", "Noto Sans CJK SC", sans-serif;
}
button, input, select { font: inherit; color: inherit; border: 0; margin: 0; padding: 0; background: none; }
button { white-space: nowrap; }
h1, h2, ul { margin: 0; padding: 0; list-style: none; font-weight: 400; }
i, kbd { font-style: normal; font-family: inherit; }
u { text-underline-offset: 2px; }
.sprite { position: absolute; width: 0; height: 0; }
.ic { width: 16px; height: 16px; flex: none; display: block; }

/* title bar */
.titlebar { height: 29px; flex: none; display: flex; align-items: center; background: #fff; padding-left: 2px; }
.titlebar .app { width: 18px; height: 18px; margin-right: 7px; }
.titlebar h1 { font-size: 16px; color: #222; flex: 1; white-space: nowrap; }
.winbtns { display: flex; padding-right: 4px; }
.winbtns button { width: 58px; height: 29px; display: grid; place-items: center; }
.winbtns svg { width: 14px; height: 14px; }

/* menu and tool bars */
.bar { height: 30px; flex: none; display: flex; align-items: center; justify-content: space-between; background: #f0f0f0; padding: 0 4px 0 2px; }
.menubar, .tools { display: flex; align-items: center; }
.grip { width: 4px; height: 20px; flex: none; background: repeating-linear-gradient(#a0a0a0 0 1px, transparent 1px 3px) no-repeat 1px 0 / 3px 100%; }
.grip.gap { margin-left: 5px; }
.menubar { font-size: 15px; height: 30px; }
.menubar > button, .menu-root > button { padding: 0 9px 0 8px; height: 26px; }
.menubar > .dxp { display: flex; align-items: center; gap: 4px; padding: 0 4px; font-size: 15px; }
.menubar .latin, .menubar kbd { font-size: 16px; }
.menu-root { position: relative; height: 26px; }
.menu-root > .open { position: relative; z-index: 3; display: block; background: #f0f0f0; border: solid #808080; border-width: 1px 1px 0; padding: 0 8px; box-shadow: 2px 0 2px #0003; height: 27px; }
.popup { position: absolute; z-index: 2; top: 26px; left: 0; width: 210px; padding-bottom: 2px; border: 1px solid #808080; background: linear-gradient(90deg, #f0f0f0 32px, #fff 32px); box-shadow: 4px 4px 3px #0003; }
.popup button { width: 100%; height: 29px; padding: 0 33px 0 39px; display: flex; align-items: center; text-align: left; position: relative; }
.popup .ic { position: absolute; left: 6px; top: 7px; }
.popup kbd { margin-left: auto; }
.popup button:disabled { color: #777; }
.popup .sub { position: absolute; right: 11px; top: 10px; border: solid transparent; border-width: 5px 0 5px 5px; border-left-color: #000; }
.popup .line { height: 5px; margin-left: 39px; background: linear-gradient(#999, #999) no-repeat 0 2px / 100% 1px; }
.tb { width: 23px; height: 24px; flex: none; display: grid; place-items: center; }
.tb.split { width: 40px; grid-template-columns: 23px 17px; }
.tb.letter { font: bold 18px/24px "Liberation Serif", serif; color: #3a63b8; }
.caret { width: 8px; height: 4px; flex: none; background: #000; clip-path: polygon(0 0, 100% 0, 50% 100%); }
.caret.dim { background: #777; }
.sep { width: 1px; height: 26px; margin: 0 2px; background: #a0a0a0; flex: none; }
.covered { width: 205px; }
.combo { position: relative; display: block; height: 24px; background: #fff; font-size: 16px; }
.combo select { appearance: none; width: 100%; height: 100%; padding: 0 18px 0 2px; display: block; }
.combo::after { content: ""; position: absolute; right: 5px; top: 10px; width: 8px; height: 4px; background: #000; clip-path: polygon(0 0, 100% 0, 50% 100%); }
.combo:not(.boxed) { background: linear-gradient(90deg, transparent calc(100% - 16px), #f0f0f0 0, #f0f0f0 calc(100% - 1px), #fff 0), #fff; }
.c-path { width: 197px; }
.c-view { width: 148px; margin-left: 2px; font-size: 15px; }
.filters { gap: 2px; padding-right: 0; margin-right: -1px; }
.pair { display: flex; margin-left: -2px; }
.c-small { width: 88px; }
.c-all { width: 169px; }

/* work area */
.work { flex: 1; min-height: 0; display: grid; grid-template-columns: 444px 1fr 32px; gap: 3px; padding: 3px; }
.panel { background: #ddd; display: flex; flex-direction: column; }
.panel-head { height: 29px; display: flex; align-items: center; padding: 0 4px 0 6px; background: linear-gradient(#b9d3e6, #a3c4dc); }
.panel-head h2 { font-size: 14px; font-weight: 700; flex: 1; }
.panel-head button { width: 20px; height: 20px; display: grid; place-items: center; }
.panel-head svg { width: 12px; height: 12px; }
.form { display: grid; grid-template-columns: 327px 85px; gap: 9px 6px; padding: 13px; align-items: center; }
.boxed { height: 31px; width: 100%; border: 1px solid #8c8c8c; background: #f2f2f2; font-size: 13px; padding: 0 4px; }
.combo.boxed::after { top: 13px; right: 9px; width: 10px; height: 5px; }
.btn { height: 29px; border: 1px solid #a0a0a0; background: #e0e0e0; font-size: 14px; }
.mode { display: flex; justify-content: space-between; align-items: center; padding: 0 13px; margin-top: -3px; }
.mode label { display: flex; align-items: center; gap: 4px; }
.mode input { appearance: none; width: 15px; height: 15px; border: 1px solid #222; border-radius: 50%; background: radial-gradient(#222 4px, #fff 5px); }
.btn.small { width: 48px; display: flex; align-items: center; padding-left: 5px; gap: 4px; }
.vline { width: 1px; height: 22px; background: #888; margin-left: 4px; }
.tree { flex: 1; margin: 15px 14px 14px; border: 1px solid #8c8c8c; background: #fffbf0; padding: 6px; }
.tree ul { height: 100%; background: #fff; }
.tree li { height: 22px; display: flex; align-items: center; border-bottom: 1px solid #ddd; }
.tree .r1 { padding-left: 2px; border: 0; }
.tree .r2 { padding-left: 17px; }
.tree .r3 { background: #39f; margin-left: 50px; }
.tree span { flex: 1; height: 22px; line-height: 22px; }
.tree .r1 span { background: #99b4d1; font-weight: 700; padding-left: 2px; }
.tree b { width: 23px; height: 22px; border-left: 1px solid #ddd; }
.tog { width: 9px; height: 9px; border: 1px solid #555; background: linear-gradient(#000, #000) no-repeat center / 5px 1px; margin-right: 5px; }
.fold { width: 14px; height: 12px; margin-right: 1px; }
.ptabs { display: flex; height: 26px; padding-bottom: 1px; }
.ptabs button { background: #fff; border: 1px solid #bbb; border-top-color: #ccc; border-left-width: 0; border-radius: 0 0 3px 3px; padding: 0 6px 0 7px; }
.ptabs .on { background: #ddd; }

.doc { display: flex; flex-direction: column; min-width: 0; }
.doctabs { height: 33px; flex: none; border-bottom: 3px solid #ddd; }
.doctabs button { height: 30px; padding: 0 5px; background: #ddd; display: flex; align-items: center; gap: 4px; }
.canvas { flex: 1; min-height: 0; position: relative; background: #6e6a69; overflow: hidden; }
.pcb { position: absolute; left: 410px; top: 215px; width: 500px; height: 390px; }
.pcb text { font: 25px "DejaVu Sans Mono", monospace; }
.silk { fill: #ff0; }
.back { fill: #808000; }
.top { fill: #f00; }
.bot { fill: #00f; }

.layers { height: 25px; flex: none; display: flex; align-items: center; background: #f0f0f0; padding-left: 4px; }
.ls { display: flex; width: 57px; height: 17px; border: 1px solid #555; color: #888; line-height: 20px; overflow: hidden; }
.ls i { width: 31px; background: #00f; border-right: 1px solid #555; }
.ls span { flex: 1; text-align: center; }
.arr { width: 23px; height: 25px; display: grid; place-items: center; }
.arr::before { content: ""; width: 5px; height: 8px; background: #000; clip-path: polygon(0 0, 100% 50%, 0 100%); }
.arr.l { margin-left: 5px; }
.arr.l::before { clip-path: polygon(100% 0, 0 50%, 100% 100%); background: #999; }
.ltabs { display: flex; height: 25px; margin-left: 2px; border-left: 1px solid #999; padding-left: 3px; }
.ltabs button { background: #fff; border: 1px solid #bbb; border-left-width: 0; border-radius: 0 0 3px 3px; display: flex; align-items: center; gap: 6px; padding: 0 3px 0 6px; }
.ltabs .on { background: #ddd; font-weight: 700; }
.sw { width: 13px; height: 13px; border: 1px solid #888; }
.red { background: #f00; }
.blue { background: #00f; }
.magenta { background: #f0f; }
.purple { background: purple; }
.yellow { background: #ff0; }
.olive { background: olive; }
.gray { background: gray; }
.maroon { background: maroon; }
.lcmds { display: flex; flex: 1; height: 25px; }
.lcmds button { flex: auto; border: 1px solid #ccc; border-left-width: 0; color: #666; font-size: 14px; }
.lcmds svg { width: 28px; height: 16px; display: block; margin: auto; }

.side { background: #f0f0f0; padding: 1px 3px; display: flex; flex-direction: column; gap: 3px; }
.side button { writing-mode: vertical-rl; text-orientation: sideways; width: 24px; padding: 4px 0 3px; border: 1px solid #ddd; background: #fafafa; font-size: 14px; line-height: 20px; text-align: left; color: #555; }

/* status bar */
.status { height: 30px; flex: none; display: flex; align-items: center; background: #f0f0f0; padding: 0 4px 0 6px; position: relative; }
.s1 { width: 190px; }
.s2 { width: 120px; }
.s3 { width: 171px; }
.s4 { width: 487px; height: 23px; border: solid #a0a0a0; border-width: 0 1px; }
.sys { margin-left: auto; width: 303px; height: 23px; display: flex; justify-content: space-between; border: 1px solid #ccc; padding: 0 4px 0 5px; color: #666; }
.ime { position: absolute; right: 17px; bottom: 1px; width: 238px; height: 37px; display: flex; align-items: center; justify-content: space-between; padding: 0 6px; background: #fafcff; border: 1px solid #b4c8dc; border-radius: 4px; box-shadow: 0 0 2px #89a; }
.ime svg { width: 22px; height: 22px; }
.ime .logo { width: 40px; height: 40px; }
.ime b, .tray b { font: 900 18px/24px "Noto Sans CJK SC", sans-serif; color: #0d6ccc; }
.imeline { width: 4px; height: 34px; border: solid #f8c8b8; border-width: 0 1px; }

/* taskbar */
.taskbar { height: 50px; flex: none; display: flex; background: #02040b; color: #fff; }
.start { width: 60px; display: grid; place-items: center; }
.start svg { width: 20px; height: 20px; }
.search { width: 430px; background: #333; padding: 0 11px; font-size: 20px; }
.search::placeholder { color: #999; opacity: 1; }
.apps { display: flex; padding-left: 2px; }
.apps button { width: 62px; display: grid; place-items: center; background: linear-gradient(#76b9ed, #76b9ed) no-repeat center bottom / 51px 3px; }
.apps .on { background: linear-gradient(#76b9ed, #76b9ed) no-repeat center bottom / 100% 3px, #3a3c40; }
.apps svg { width: 28px; height: 28px; }
.tray { margin-left: auto; display: flex; align-items: center; gap: 6px; padding-right: 4px; }
.tray svg { width: 24px; height: 24px; }
.tray b { width: 24px; margin-right: 6px; text-align: center; color: #fff; font-weight: 700; }
.tray time { font-size: 16px; line-height: 21px; text-align: center; padding: 0 6px 0 8px; border-right: 1px solid #444; }
```
